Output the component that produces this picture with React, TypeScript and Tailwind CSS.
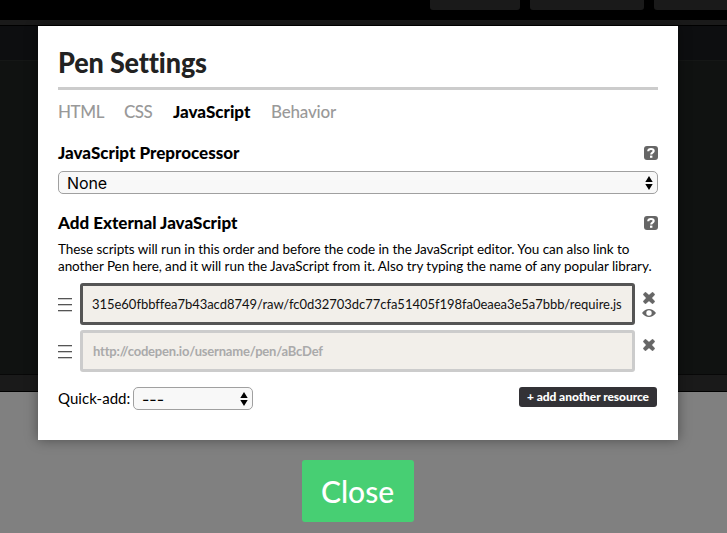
import React from "react";

function HelpIcon() {
  return (
    <svg width="14" height="14" viewBox="0 0 14 14" className="block">
      <rect width="14" height="14" rx="3" fill="#666" />
      <path d="M4.200 5.200C4.300 3.700 5.400 3 7 3c1.700 0 2.700.8 2.700 2 0 1.700-2.500 1.600-2.500 3.500" fill="none" stroke="#fff" strokeWidth="2.100" />
      <rect x="6" y="9.600" width="2.400" height="2.200" fill="#fff" />
    </svg>
  );
}

function CrossIcon() {
  return (
    <svg width="12" height="12" viewBox="0 0 12 12" className="block">
      <path
        d="M2.400 0 6 3.100 9.600 0 12 2.500 8.800 6 12 9.500 9.600 12 6 8.900 2.400 12 0 9.500 3.200 6 0 2.500Z"
        fill="#666"
        stroke="#666"
        strokeWidth=".3"
      />
    </svg>
  );
}

function EyeIcon() {
  return (
    <svg width="14" height="8" viewBox="0 0 14 8" className="block">
      <path
        fillRule="evenodd"
        d="M0 4C2 1.200 4.300 0 7 0s5 1.200 7 4c-2 2.800-4.300 4-7 4S2 6.800 0 4ZM7 1.300a2.700 2.700 0 1 0 0 5.400 2.700 2.700 0 0 0 0-5.400Z"
        fill="#666"
      />
    </svg>
  );
}

function Arrows() {
  return (
    <svg width="8" height="14" viewBox="0 0 8 14" className="block">
      <path d="M4 0 7.700 6H.3ZM4 14 .3 8h7.400Z" fill="#000" />
    </svg>
  );
}

function Handle() {
  return (
    <div className="mt-[15px] flex w-[14px] flex-col gap-1">
      <div className="h-[2px] border-t border-[#555] bg-[#ccc]" />
      <div className="h-[2px] border-t border-[#555] bg-[#ccc]" />
      <div className="h-[2px] border-t border-[#555] bg-[#ccc]" />
    </div>
  );
}

function Heading({ children }: { children: React.ReactNode }) {
  return (
    <div className="flex h-5 items-center justify-between">
      <h2 className="text-[17px] leading-5 font-black whitespace-nowrap">{children}</h2>
      <HelpIcon />
    </div>
  );
}

function Backdrop() {
  return (
    <div className="flex h-full flex-col bg-[#808080]">
      <div className="flex h-5 gap-[10px] bg-black pl-[430px]">
        <div className="h-[10px] w-[90px] shrink-0 rounded-b-[3px] bg-[#1a1a1a]" />
        <div className="h-[10px] w-[114px] shrink-0 rounded-b-[3px] bg-[#1a1a1a]" />
        <div className="h-[10px] grow rounded-bl-[3px] bg-[#1a1a1a]" />
      </div>
      <div className="h-[6px] border-b border-black bg-[#1a1a1a]" />
      <div className="h-[34px] bg-[#0d0e10]" />
      <div className="h-[314px] border-t border-[#151716] bg-[#101211]" />
      <div className="h-[18px] border-y border-t-[#080808] border-b-black bg-[#1a1a1a]" />
    </div>
  );
}

export default function App() {
  return (
    <div className="relative h-[533px] w-[727px] overflow-hidden font-[Lato,sans-serif] text-black">
      <Backdrop />
      <div className="absolute inset-0 flex flex-col pt-[26px] pl-[38px]">
        <div className="flex h-[414px] w-[640px] flex-col bg-white px-5 shadow-[0_0_12px_rgba(0,0,0,0.4)]">
          <div className="flex h-16 border-b-[3px] border-[#ccc] pt-[18px]">
            <h1 className="origin-left scale-x-[0.93] text-[29px] leading-9 font-black tracking-[-0.15px] whitespace-nowrap text-[#222]">Pen Settings</h1>
          </div>
          <nav className="mt-[12px] flex h-5 gap-5 text-[17px] leading-5 font-medium whitespace-nowrap text-[#999]">
            <span className="w-[46px] tracking-[-0.4px]">HTML</span>
            <span className="w-[29px] tracking-[-0.6px]">CSS</span>
            <span className="w-[78px] font-black text-black">JavaScript</span>
            <span className="tracking-[-0.2px]">Behavior</span>
          </nav>
          <div className="mt-[21px]">
            <Heading>JavaScript Preprocessor</Heading>
          </div>
          <div className="mt-2 flex h-[23px] items-center justify-between rounded-[5px] border border-[#a0a0a0] bg-[#f8f8f8] pr-[4px] pl-2 font-[Inter,sans-serif] text-[16px] leading-5">
            <span className="tracking-[-0.1px]">None</span>
            <Arrows />
          </div>
          <div className="mt-[19px]">
            <Heading>Add External JavaScript</Heading>
          </div>
          <div className="mt-[8px] text-[13.5px] leading-[17px] whitespace-nowrap">
            <p className="tracking-[-0.07px]">These scripts will run in this order and before the code in the JavaScript editor. You can also link to</p>
            <p className="tracking-[-0.06px]">another Pen here, and it will run the JavaScript from it. Also try typing the name of any popular library.</p>
          </div>
          <div className="mt-[8px] flex h-[42px]">
            <Handle />
            <div className="ml-2 flex w-[555px] items-center rounded-[3px] border-[3px] border-[#555] bg-[#f2efea] pt-[2px] pl-[9px] text-[13px] whitespace-nowrap text-[#111]">
              <span className="tracking-[-0.03px]">315e60fbbffea7b43acd8749/raw/fc0d32703dc77cfa51405f198fa0eaea3e5a7bbb/require.js</span>
            </div>
            <div className="ml-[7px] flex flex-col items-center gap-[5px] pt-[9px]">
              <CrossIcon />
              <EyeIcon />
            </div>
          </div>
          <div className="mt-[5px] flex h-[42px]">
            <Handle />
            <div className="ml-2 flex w-[555px] items-center rounded-[3px] border-[3px] border-[#ccc] bg-[#f2efea] pt-[2px] pl-[10px] text-[13px] font-bold whitespace-nowrap text-[#aaa]">
              <span className="tracking-[-0.2px]">http://codepen.io/username/pen/aBcDef</span>
            </div>
            <div className="ml-[8px] pt-[9px]">
              <CrossIcon />
            </div>
          </div>
          <div className="mt-[15px] flex h-[23px] text-[15px] leading-[22px]">
            <span className="w-[75px] tracking-[0.05px] whitespace-nowrap">Quick-add:</span>
            <div className="flex w-[120px] items-center justify-between rounded-[5px] border border-[#a0a0a0] bg-[#f8f8f8] pr-[4px] pl-2 font-[Inter,sans-serif] text-[16px]">
              <span>---</span>
              <Arrows />
            </div>
            <button className="mr-px ml-auto h-5 w-[138px] rounded-[3px] bg-[#333236] text-[12px] leading-5 font-black tracking-[-0.07px] whitespace-nowrap text-white">
              + add another resource
            </button>
          </div>
        </div>
        <button className="mt-5 ml-[264px] h-[62px] w-[112px] rounded-[3px] bg-[#47cf73] pr-px text-[30px] leading-[63px] font-medium text-white">
          Close
        </button>
      </div>
    </div>
  );
}
